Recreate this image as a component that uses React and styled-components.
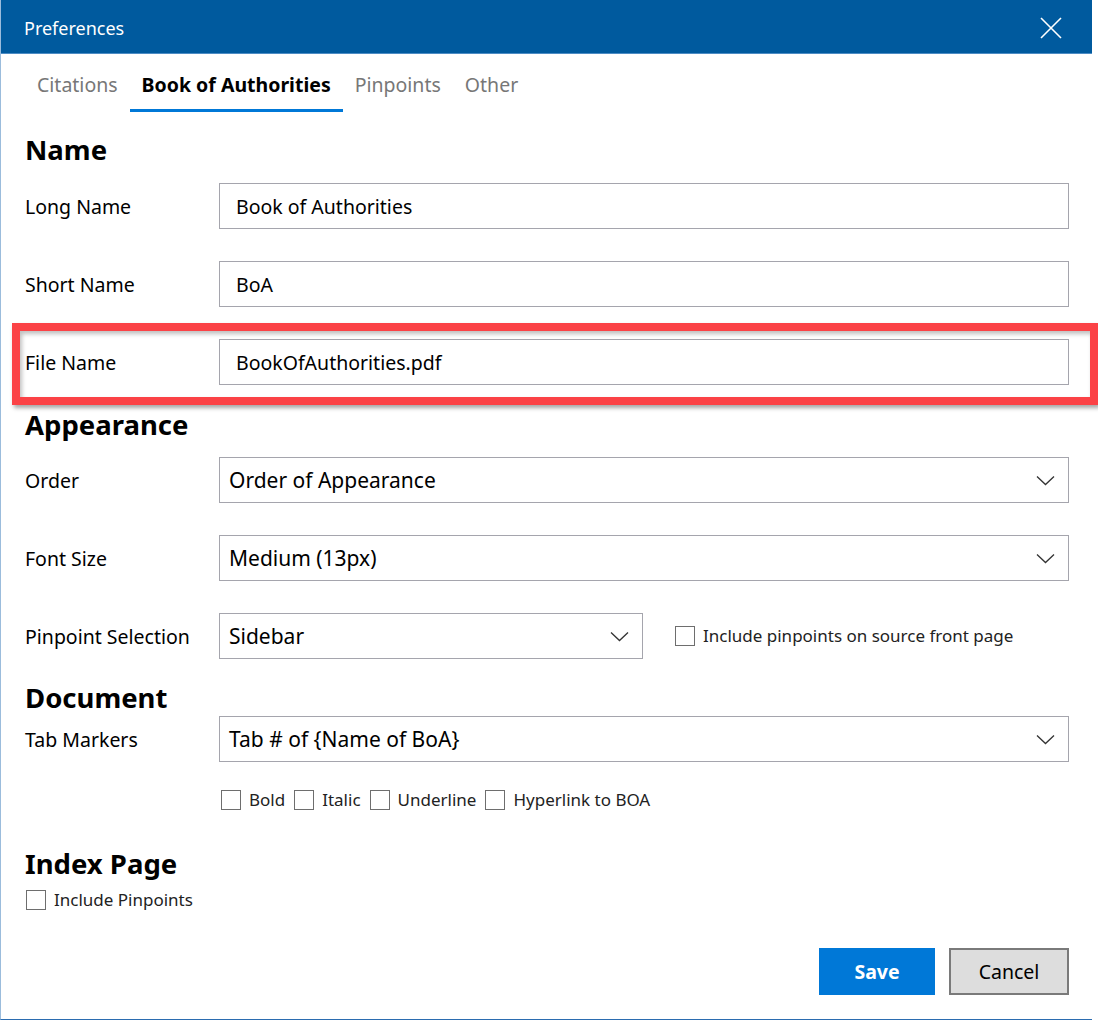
import styled, { createGlobalStyle } from 'styled-components';

const GlobalStyle = createGlobalStyle`
    html, body {
        margin: 0;
        padding: 0;
        background: #ffffff;
        font-family: "Noto Sans", "Open Sans", sans-serif;
        color: #000;
        overflow: hidden;
    }
`;

const Page = styled.div`
    width: 1098px;
    height: 1023px;
    overflow: hidden;
    background: #ffffff;
`;

const Dialog = styled.div`
    width: 1092px;
    height: 1020px;
    box-sizing: border-box;
    border-left: 1px solid #9bbcdc;
    border-bottom: 1px solid #2b6cb0;
    background: #fff;
    display: flex;
    flex-direction: column;
`;

const TitleBar = styled.div`
    height: 54px;
    flex: none;
    background: #005a9e;
    display: flex;
    align-items: center;
    justify-content: space-between;
    padding: 3px 29px 0 23px;
    color: #fff;
    font-size: 18px;
    border-bottom: 1px solid #4d8cc4;
    box-sizing: border-box;
`;

const CloseButton = styled.button`
    background: none;
    border: none;
    padding: 0;
    width: 24px;
    height: 24px;
    display: flex;
    align-items: center;
    justify-content: center;
    cursor: pointer;
`;

const TabBar = styled.div`
    display: flex;
    padding-left: 24px;
`;

const Tab = styled.div`
    padding: 17px 12px 10px;
    line-height: 28px;
    font-size: 19.5px;
    color: ${(p) => (p.$active ? '#000' : '#777')};
    font-weight: ${(p) => (p.$active ? 700 : 400)};
    border-bottom: 3px solid ${(p) => (p.$active ? '#0078d7' : 'transparent')};
    cursor: pointer;
`;

const Body = styled.div`
    flex: 1;
    display: flex;
    flex-direction: column;
    padding: 0 23px 24px 24px;
`;

const Heading = styled.h2`
    margin: ${(p) => p.$top}px 0 ${(p) => p.$bottom}px;
    font-size: 27.5px;
    line-height: 36px;
    font-weight: 700;
`;

const Rows = styled.div`
    display: flex;
    flex-direction: column;
    gap: 32px;
`;

const Row = styled.div`
    display: grid;
    grid-template-columns: 194px 1fr;
    align-items: center;
    position: relative;

    ${(p) =>
        p.$highlight &&
        `
        &::after {
            content: '';
            position: absolute;
            top: -16px;
            bottom: -20px;
            left: -13px;
            right: -29px;
            border: 8px solid #fb4246;
            box-shadow: 2px 3px 4px rgba(0, 0, 0, 0.35), inset 2px 3px 4px rgba(0, 0, 0, 0.25);
            pointer-events: none;
        }
    `}
`;

const Label = styled.label`
    font-size: 19.5px;
`;

const TextInput = styled.input`
    height: 46px;
    box-sizing: border-box;
    border: 1px solid #a5a5ad;
    padding: 0 16px;
    font-family: inherit;
    font-size: 19.5px;
    color: #000;
    outline: none;
    width: 100%;
`;

const FieldLine = styled.div`
    display: flex;
    align-items: center;
    gap: 32px;
`;

const SelectBox = styled.div`
    height: 46px;
    box-sizing: border-box;
    width: ${(p) => p.$width || '100%'};
    border: 1px solid #a5a5ad;
    display: flex;
    align-items: center;
    justify-content: space-between;
    padding: 0 13px 0 9px;
    font-size: 21px;
    cursor: pointer;
`;

const CheckLine = styled.div`
    display: flex;
    align-items: center;
    gap: 9px;
    margin: ${(p) => p.$margin || '0'};
`;

const CheckItem = styled.label`
    display: flex;
    align-items: center;
    gap: 8px;
    font-size: 17px;
    line-height: 20px;
    color: #222;
    cursor: pointer;
`;

const Box = styled.span`
    width: 20px;
    height: 20px;
    box-sizing: border-box;
    border: 1px solid #6e6e6e;
    background: #fff;
    flex: none;
`;

const Footer = styled.div`
    margin-top: auto;
    display: flex;
    justify-content: flex-end;
    gap: 14px;
`;

const Button = styled.button`
    height: 47px;
    width: ${(p) => p.$width}px;
    font-family: inherit;
    font-size: 19.5px;
    box-sizing: border-box;
    cursor: pointer;
    background: ${(p) => (p.$primary ? '#0078d7' : '#dddddd')};
    color: ${(p) => (p.$primary ? '#fff' : '#000')};
    font-weight: ${(p) => (p.$primary ? 700 : 400)};
    border: ${(p) => (p.$primary ? '1px solid #0078d7' : '2px solid #7a7a7a')};
`;

const Chevron = () => (
    <svg width="19" height="11" viewBox="0 0 19 11" fill="none">
        <path d="M1 1.5 L9.5 9.5 L18 1.5" stroke="#333" strokeWidth="1.3" />
    </svg>
);

const Select = ({ value, width }) => (
    <SelectBox $width={width}>
        <span>{value}</span>
        <Chevron />
    </SelectBox>
);

const Check = ({ children }) => (
    <CheckItem>
        <Box />
        {children}
    </CheckItem>
);

export default function App() {
    return (
        <Page>
            <GlobalStyle />
            <Dialog>
                <TitleBar>
                    Preferences
                    <CloseButton aria-label="Close">
                        <svg width="22" height="22" viewBox="0 0 22 22">
                            <path d="M1 1 L21 21 M21 1 L1 21" stroke="#fff" strokeWidth="1.6" />
                        </svg>
                    </CloseButton>
                </TitleBar>

                <TabBar>
                    <Tab>Citations</Tab>
                    <Tab $active>Book of Authorities</Tab>
                    <Tab>Pinpoints</Tab>
                    <Tab>Other</Tab>
                </TabBar>

                <Body>
                    <Heading $top={20} $bottom={15}>Name</Heading>
                    <Rows>
                        <Row>
                            <Label>Long Name</Label>
                            <TextInput defaultValue="Book of Authorities" />
                        </Row>
                        <Row>
                            <Label>Short Name</Label>
                            <TextInput defaultValue="BoA" />
                        </Row>
                        <Row $highlight>
                            <Label>File Name</Label>
                            <TextInput defaultValue="BookOfAuthorities.pdf" />
                        </Row>
                    </Rows>

                    <Heading $top={22} $bottom={14}>Appearance</Heading>
                    <Rows>
                        <Row>
                            <Label>Order</Label>
                            <Select value="Order of Appearance" />
                        </Row>
                        <Row>
                            <Label>Font Size</Label>
                            <Select value="Medium (13px)" />
                        </Row>
                        <Row>
                            <Label>Pinpoint Selection</Label>
                            <FieldLine>
                                <Select value="Sidebar" width="424px" />
                                <Check>Include pinpoints on source front page</Check>
                            </FieldLine>
                        </Row>
                    </Rows>

                    <Heading $top={21} $bottom={0}>Document</Heading>
                    <Row>
                        <Label>Tab Markers</Label>
                        <Select value="Tab # of {Name of BoA}" />
                    </Row>
                    <CheckLine $margin="28px 0 0 196px">
                        <Check>Bold</Check>
                        <Check>Italic</Check>
                        <Check>Underline</Check>
                        <Check>Hyperlink to BOA</Check>
                    </CheckLine>

                    <Heading $top={36} $bottom={8}>Index Page</Heading>
                    <CheckLine $margin="0 0 0 1px">
                        <Check>Include Pinpoints</Check>
                    </CheckLine>

                    <Footer>
                        <Button $primary $width={116}>Save</Button>
                        <Button $width={120}>Cancel</Button>
                    </Footer>
                </Body>
            </Dialog>
        </Page>
    );
}
